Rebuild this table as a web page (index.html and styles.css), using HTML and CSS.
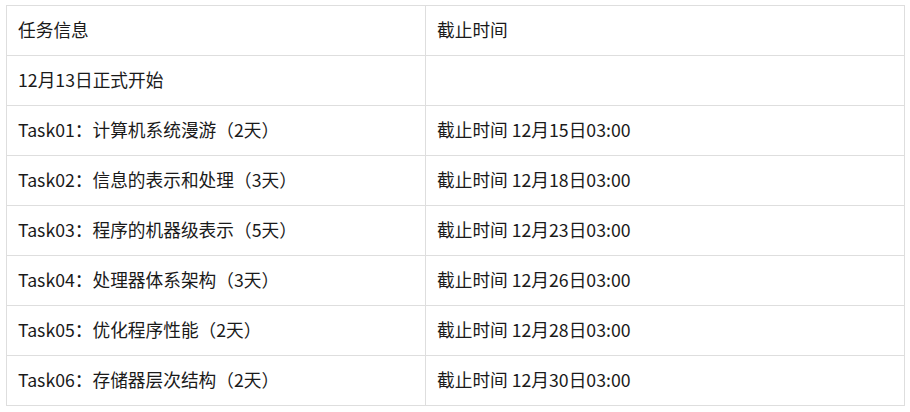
FILE: index.html
```
<!DOCTYPE html>
<html><head><meta charset="utf-8"><link rel="stylesheet" href="styles.css"></head>
<body>
<table class="tasks">
<tr><td class="c1">任务信息</td><td>截止时间</td></tr>
<tr><td class="c1">12月13日正式开始</td><td></td></tr>
<tr><td class="c1">Task01：计算机系统漫游（2天）</td><td>截止时间 12月15日03:00</td></tr>
<tr><td class="c1">Task02：信息的表示和处理（3天）</td><td>截止时间 12月18日03:00</td></tr>
<tr><td class="c1">Task03：程序的机器级表示（5天）</td><td>截止时间 12月23日03:00</td></tr>
<tr><td class="c1">Task04：处理器体系架构（3天）</td><td>截止时间 12月26日03:00</td></tr>
<tr><td class="c1">Task05：优化程序性能（2天）</td><td>截止时间 12月28日03:00</td></tr>
<tr><td class="c1">Task06：存储器层次结构（2天）</td><td>截止时间 12月30日03:00</td></tr>
</table>
</body></html>
```
FILE: styles.css
```
html, body { margin: 0; padding: 0; background: #fff; }
body { padding: 5px 0 0 6px; font-family: "Noto Sans CJK SC", "Liberation Sans", sans-serif; font-size: 17.7px; color: #1a1a1a; }
.tasks { border-collapse: collapse; width: 899px; table-layout: fixed; }
.tasks td { border: 1px solid #dedede; height: 50px; padding: 0 11px 4px; box-sizing: border-box; vertical-align: middle; line-height: 22px; }
.tasks td.c1 { width: 419px; }
```
